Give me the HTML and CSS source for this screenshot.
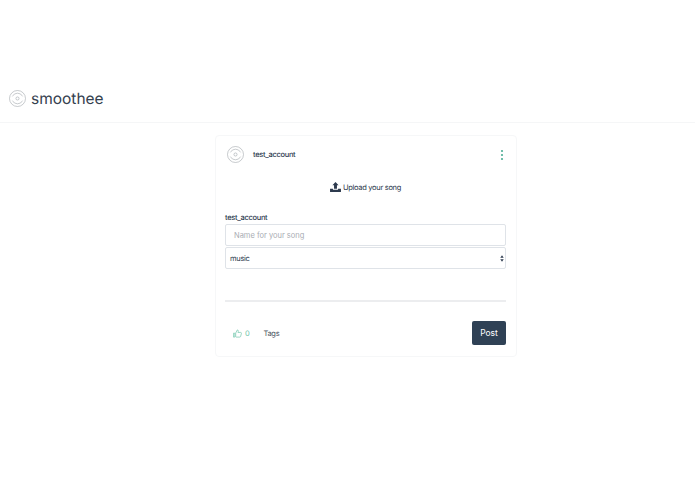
FILE: index.html
```html
<!DOCTYPE html>
<html lang="en">
<head>
  <meta charset="UTF-8" />
  <title>smoothee</title>
  <link rel="stylesheet" href="styles.css">
</head>
<body>
  <header class="navbar">
    <svg class="disc" viewBox="0 0 24 24">
      <circle cx="12" cy="12" r="11.3"/>
      <path d="M4.8 9a8 8 0 0 1 14.4 0M19.2 15a8 8 0 0 1-14.4 0"/>
      <circle cx="12" cy="12" r="2.2"/>
    </svg>
    <span class="brand">smoothee</span>
  </header>

  <main class="card">
    <div class="card-head">
      <div class="user">
        <svg class="disc" viewBox="0 0 24 24">
          <circle cx="12" cy="12" r="11.3"/>
          <path d="M4.8 9a8 8 0 0 1 14.4 0M19.2 15a8 8 0 0 1-14.4 0"/>
          <circle cx="12" cy="12" r="2.2"/>
        </svg>
        <span class="username">test_account</span>
      </div>
      <svg class="more" viewBox="0 0 4 12">
        <circle cx="2" cy="2" r="1.1"/>
        <circle cx="2" cy="6" r="1.1"/>
        <circle cx="2" cy="10" r="1.1"/>
      </svg>
    </div>

    <div class="upload">
      <svg class="upload-icon" viewBox="0 0 12 11">
        <path d="M6 0 9.4 3.6H7.6V7.4H4.4V3.6H2.6Z"/>
        <path d="M0 7.4H3.2V8.6H8.8V7.4H12V11H0Z"/>
      </svg>
      <span>Upload your song</span>
    </div>

    <form class="song-form">
      <label class="field-label" for="song-name">test_account</label>
      <input class="field" id="song-name" type="text" placeholder="Name for your song">
      <div class="field select">
        <span>music</span>
        <svg class="carets" viewBox="0 0 6 10">
          <path d="M3 0 5.6 3.8H.4Z"/>
          <path d="M3 10 .4 6.2H5.6Z"/>
        </svg>
      </div>
    </form>

    <hr class="divider">

    <div class="card-foot">
      <div class="meta">
        <span class="likes">
          <svg class="thumb" viewBox="0 0 12 12">
            <path d="M.6 5.6H2.4V10.8H.6ZM3.6 10.4V5.4L5.8 1.2C6.8 1.2 7.2 2 7 3L6.6 4.6H10.2C11 4.6 11.4 5.2 11.2 6L10.2 9.8C10 10.4 9.6 10.8 9 10.8H4.4Z"/>
          </svg>
          <span>0</span>
        </span>
        <span class="tags">Tags</span>
      </div>
      <button class="post" type="button">Post</button>
    </div>
  </main>
</body>
</html>
```

FILE: styles.css
```css
* {
  margin: 0;
  padding: 0;
  box-sizing: border-box;
}
body {
  background: #fff;
  color: #2d3a4e;
  font-family: 'Inter', 'Liberation Sans', sans-serif;
  font-size: 7.5px;
  letter-spacing: -0.3px;
  text-rendering: geometricPrecision;
}
.navbar {
  display: flex;
  align-items: center;
  gap: 5px;
  height: 123px;
  padding: 90px 0 15px 9px;
  border-bottom: 1px solid #f5f6f7;
}
.disc {
  width: 17px;
  height: 17px;
  fill: none;
  stroke: #8f959b;
  stroke-width: 0.7;
}
.brand {
  font-size: 15.5px;
  letter-spacing: 0;
  color: #35414f;
}
.card {
  width: 302px;
  height: 222px;
  margin: 12px 0 0 215px;
  padding: 10px 10px 0 9px;
  border: 1px solid #f6f7f8;
  border-radius: 4px;
}
.card-head {
  display: flex;
  justify-content: space-between;
  align-items: center;
  padding-left: 2px;
}
.user {
  display: flex;
  align-items: center;
  gap: 9px;
}
.username {
  font-weight: 500;
}
.more {
  width: 4px;
  height: 12px;
  margin-right: 2px;
  fill: #4fae96;
}
.upload {
  display: flex;
  justify-content: center;
  align-items: center;
  gap: 2px;
  margin-top: 19px;
}
.upload-icon {
  width: 11px;
  height: 10px;
  fill: #2d3a4e;
}
.song-form {
  margin-top: 21px;
}
.field-label {
  display: block;
  font-weight: 500;
}
.field {
  display: block;
  width: 100%;
  height: 22px;
  margin-top: 2px;
  padding: 0 8px;
  background: #fff;
  border: 1px solid #dfe3e8;
  border-radius: 2px;
  font: inherit;
}
.song-form .select {
  margin-top: 1px;
}
.field::placeholder {
  color: #a9adb3;
}
.select {
  display: flex;
  justify-content: space-between;
  align-items: center;
  padding: 0 1px 0 4px;
}
.carets {
  width: 4px;
  height: 7px;
  fill: #2d3a4e;
}
.divider {
  margin-top: 31px;
  border: 0;
  border-top: 2px solid #ecedef;
}
.card-foot {
  display: flex;
  justify-content: space-between;
  align-items: center;
  margin-top: 19px;
}
.meta {
  display: flex;
  align-items: center;
  gap: 14px;
  padding-left: 8px;
}
.likes {
  display: flex;
  align-items: center;
  gap: 3px;
  color: #6cc3a8;
}
.thumb {
  width: 9px;
  height: 9px;
  fill: none;
  stroke: #6cc3a8;
  stroke-width: 0.9;
}
.tags {
  color: #4a5461;
}
.post {
  width: 34px;
  height: 24px;
  background: #2f4155;
  color: #fff;
  border: 0;
  border-radius: 2px;
  font: inherit;
  font-size: 8.5px;
}
```
